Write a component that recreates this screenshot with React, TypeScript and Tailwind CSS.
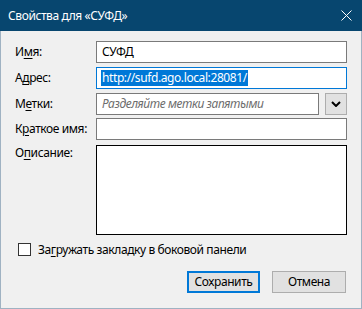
export default function App() {
  const font = { fontFamily: '"Noto Sans", "Open Sans", sans-serif' };
  return (
    <div className="w-[362px] h-[309px] bg-[#f0f0f0] border border-t-0 border-[#9fb2c2] flex flex-col text-[12px] leading-[16px] tracking-[-0.4px] text-black" style={font}>
      <div className="h-[31px] bg-[#07466f] flex items-center justify-between pl-[8px] pr-[9px] -mx-px text-white shrink-0">
        <span className="text-[12px]">Свойства для «СУФД»</span>
        <svg width="11" height="11" viewBox="0 0 11 11" className="mr-[1px]">
          <path d="M0.5 0.5 L10.5 10.5 M10.5 0.5 L0.5 10.5" stroke="white" strokeWidth="1" />
        </svg>
      </div>
      <div className="flex flex-col pl-[14px] pr-[14px] pt-[10px]">
        <div className="flex items-center h-[22px]">
          <label className="w-[81px] shrink-0">
            И<span className="underline underline-offset-2">м</span>я:
          </label>
          <div className="flex-1 h-[22px] border border-[#7a7a7a] bg-white flex items-center px-[5px]">СУФД</div>
        </div>
        <div className="flex items-center h-[22px] mt-[4px]">
          <label className="w-[81px] shrink-0">
            А<span className="underline underline-offset-2">д</span>рес:
          </label>
          <div className="flex-1 h-[22px] border border-[#0078d7] bg-white flex items-center px-[4px]">
            <span className="bg-[#0078d7] text-white leading-[16px] px-px">http://sufd.ago.local:28081/</span>
          </div>
        </div>
        <div className="flex items-center h-[22px] mt-[4px]">
          <label className="w-[81px] shrink-0">
            М<span className="underline underline-offset-2">е</span>тки:
          </label>
          <div className="flex-1 h-[22px] border border-[#7a7a7a] bg-white flex items-center px-[5px] italic text-[#6d6d6d]">
            Разделяйте метки запятыми
          </div>
          <div className="w-[22px] h-[22px] ml-[6px] border border-[#adadad] bg-[#e1e1e1] flex items-center justify-center">
            <svg width="10" height="6" viewBox="0 0 10 6">
              <path d="M1 1 L5 5 L9 1" fill="none" stroke="black" strokeWidth="2" />
            </svg>
          </div>
        </div>
        <div className="flex items-center h-[22px] mt-[3px]">
          <label className="w-[81px] shrink-0">
            К<span className="underline underline-offset-2">р</span>аткое имя:
          </label>
          <div className="flex-1 h-[22px] border border-[#7a7a7a] bg-white"></div>
        </div>
        <div className="flex items-start mt-[5px]">
          <label className="w-[81px] shrink-0">
            О<span className="underline underline-offset-2">п</span>исание:
          </label>
          <div className="flex-1 h-[90px] border border-[#000000] bg-white"></div>
        </div>
        <div className="flex items-center h-[13px] mt-[8px] pl-[3px]">
          <div className="w-[13px] h-[13px] border border-[#333333] bg-white shrink-0"></div>
          <span className="ml-[7px]">
            За<span className="underline underline-offset-2">г</span>ружать закладку в боковой панели
          </span>
        </div>
        <div className="flex justify-end mt-[15px] gap-[12px] pr-px">
          <button className="w-[73px] h-[22px] border-2 border-[#0078d7] bg-[#e1e1e1] flex items-center justify-center">
            Сохранить
          </button>
          <button className="w-[74px] h-[22px] border border-[#adadad] bg-[#e1e1e1] flex items-center justify-center">
            Отмена
          </button>
        </div>
      </div>
    </div>
  );
}
